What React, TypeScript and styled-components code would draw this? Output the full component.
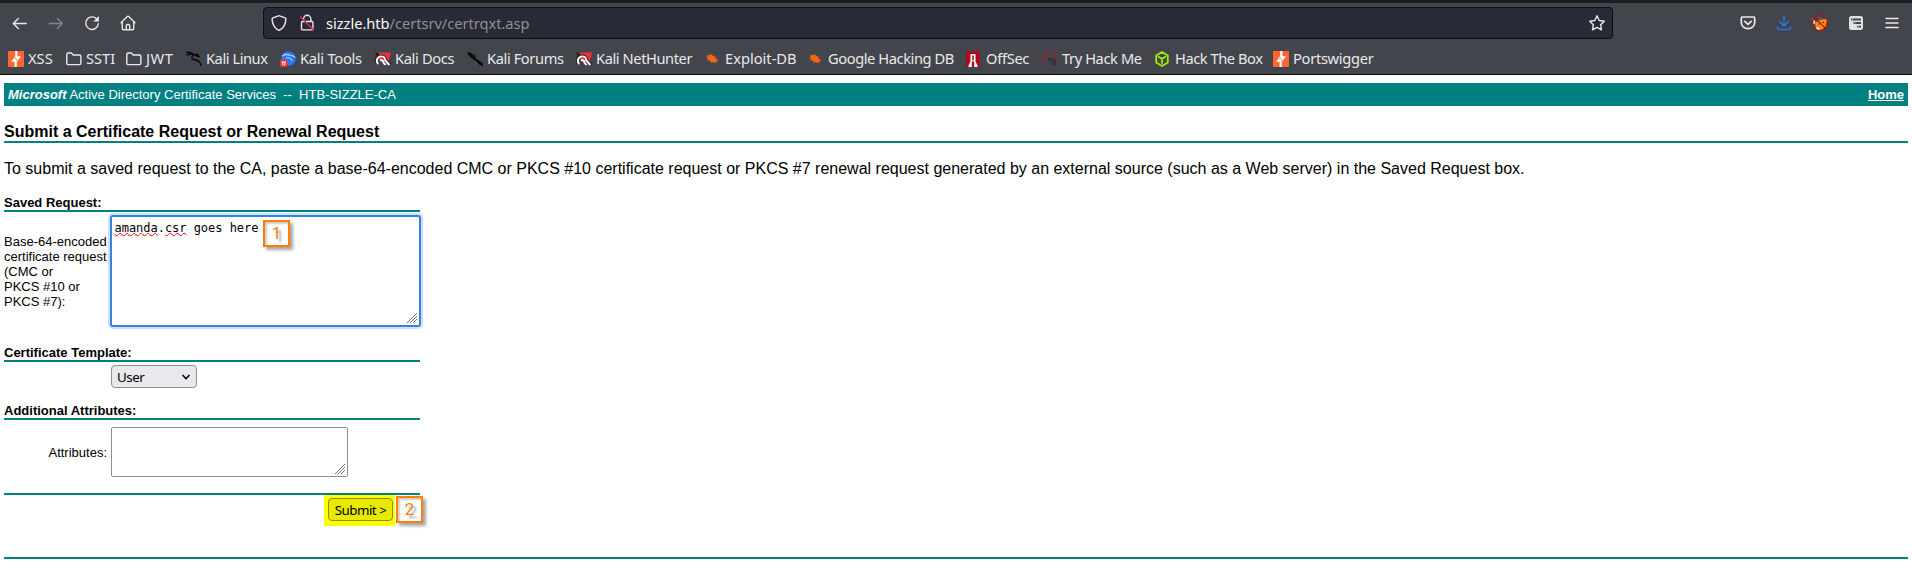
import React from 'react';
import styled, { createGlobalStyle } from 'styled-components';

const Global = createGlobalStyle`
  * { box-sizing: border-box; }
  body { margin: 0; background: #fff; color: #000; font-family: "Liberation Sans", Arial, sans-serif; }
  html, body { overflow: hidden; }
`;

const UI_FONT = '"Noto Sans", sans-serif';
const TEAL = '#008080';

const Screen = styled.div`
  width: 1912px;
  height: 570px;
  overflow: hidden;
  display: flex;
  flex-direction: column;
`;

const Chrome = styled.header`
  height: 75px;
  flex: none;
  background: #43454c;
  border-top: 3px solid #1c1d21;
  border-bottom: 1px solid #0c0c0d;
  font-family: ${UI_FONT};
  color: #e9e9ea;
`;

const Toolbar = styled.div`
  display: flex;
  align-items: center;
  height: 40px;
  padding: 0 11px 0 11px;
`;

const NavGroup = styled.nav`
  display: flex;
  gap: 18px;
  width: 252px;
`;

const Glyph = styled.svg<{ $size?: number }>`
  width: ${p => p.$size ?? 18}px;
  height: ${p => p.$size ?? 18}px;
  flex: none;
  display: block;
  overflow: visible;
`;

const AddressBar = styled.div`
  display: flex;
  align-items: center;
  width: 1350px;
  height: 32px;
  background: #282a35;
  border: 1px solid #0e0f12;
  border-radius: 4px;
  padding: 0 6px 0 6px;
  gap: 10px;
`;

const Url = styled.span`
  flex: 1;
  font-size: 14.67px;
  line-height: 20px;
  letter-spacing: -0.04px;
  color: #8f9095;
  white-space: nowrap;
  b { font-weight: 400; color: #f9f9fa; }
`;

const Actions = styled.div`
  display: flex;
  gap: 18px;
  margin-left: auto;
`;

const Bookmarks = styled.div`
  display: flex;
  height: 31px;
  align-items: flex-start;
  padding: 8px 0 0 8px;
`;

const Bookmark = styled.div<{ $w: number; $track: number }>`
  display: flex;
  align-items: center;
  gap: 4px;
  flex: none;
  height: 16px;
  width: ${p => p.$w}px;
  font-size: 14.67px;
  line-height: 20px;
  letter-spacing: ${p => p.$track}px;
  white-space: nowrap;
  span { margin-top: -2px; }
`;

const Page = styled.main`
  padding: 8px 4px 0;
  display: flex;
  flex-direction: column;
`;

const Banner = styled.div`
  display: flex;
  justify-content: space-between;
  align-items: center;
  height: 23px;
  padding: 0 4px;
  background: ${TEAL};
  color: #fff;
  font-size: 13px;
  white-space: pre;
  a { color: #fff; font-weight: 700; text-decoration: underline; }
`;

const Title = styled.h1`
  margin: 16px 0 0;
  height: 21px;
  padding-top: 1px;
  border-bottom: 2px solid ${TEAL};
  font-size: 16px;
  line-height: 18px;
`;

const Intro = styled.p`
  margin: 17px 0 0;
  font-size: 16px;
  line-height: 18px;
  height: 33px;
`;

const Form = styled.form`
  width: 416px;
  display: flex;
  flex-direction: column;
`;

const Legend = styled.h2<{ $top: number }>`
  margin: ${p => p.$top}px 0 0;
  height: 18px;
  padding-top: 1px;
  font-size: 13px;
  line-height: 15px;
  border-bottom: 2px solid ${TEAL};
`;

const Row = styled.div<{ $top: number; $height: number }>`
  display: flex;
  align-items: center;
  margin-top: ${p => p.$top}px;
  height: ${p => p.$height}px;
`;

const Label = styled.label<{ $right?: boolean }>`
  width: 107px;
  padding-right: ${p => (p.$right ? 4 : 0)}px;
  text-align: ${p => (p.$right ? 'right' : 'left')};
  flex: none;
  font-size: 13px;
  line-height: 15px;
  margin-right: -1px;
  white-space: nowrap;
`;

const Field = styled.div<{ $w: number; $h: number; $focus?: boolean }>`
  position: relative;
  flex: none;
  display: flex;
  align-items: flex-start;
  width: ${p => p.$w}px;
  height: ${p => p.$h}px;
  padding: ${p => (p.$focus ? '4px 2.5px' : '3px')};
  margin-left: ${p => (p.$focus ? 0 : 1)}px;
  border: ${p => (p.$focus ? '2px solid #3584e4' : '1px solid #8f8f9d')};
  border-radius: ${p => (p.$focus ? 3 : 2)}px;
  box-shadow: ${p => (p.$focus ? '0 0 0 2px #c9e2fb' : 'none')};
  background: #fff;
  font: 12px/14px "DejaVu Sans Mono", monospace;
  letter-spacing: -0.03px;
  white-space: pre;
`;

const Misspelt = styled.span`
  text-decoration: underline wavy #f00 1px;
  text-underline-offset: 0;
  text-decoration-skip-ink: none;
`;

const Grip = styled.svg`
  position: absolute;
  right: 2px;
  bottom: 2px;
  width: 10px;
  height: 10px;
`;

const Select = styled.div`
  display: flex;
  align-items: center;
  justify-content: space-between;
  width: 86px;
  height: 23px;
  margin-left: 107px;
  padding: 0 5px;
  border: 1px solid #8f8f9d;
  border-radius: 4px;
  background: #e9e9ed;
  font: 13.33px/18px ${UI_FONT};
  letter-spacing: -0.5px;
`;

const Footer = styled.div`
  display: flex;
  justify-content: flex-end;
  position: relative;
  margin-top: 16px;
  height: 64px;
  border-top: 2px solid ${TEAL};
`;

const Highlight = styled.div`
  width: 71px;
  height: 31px;
  margin-right: 25px;
  padding: 3px 2px 0 4px;
  background: #ff0;
`;

const SubmitButton = styled.button`
  display: block;
  width: 65px;
  height: 23px;
  padding: 0;
  border: 1px solid #8f8f00;
  border-radius: 4px;
  background: #e9e900;
  color: #000;
  font: 13.33px/20px ${UI_FONT};
  letter-spacing: -0.5px;
  white-space: nowrap;
`;

const Marker = styled.span<{ $x: number; $y: number }>`
  position: absolute;
  left: ${p => p.$x}px;
  top: ${p => p.$y}px;
  width: 27px;
  height: 27px;
  border: 2px solid #ff8000;
  background: #fff;
  box-shadow: 3px 3px 3px rgba(0, 0, 0, 0.35), inset 2px 2px 2px rgba(0, 0, 0, 0.2);
  color: #ff8000;
  text-shadow: 3px 3px 2px rgba(70, 90, 120, 0.5);
  font: 17px/23px Roboto, sans-serif;
  text-align: center;
`;

const PageEnd = styled.div`
  height: 2px;
  background: ${TEAL};
`;

const line = { fill: 'none', stroke: '#e9e9ea', strokeWidth: 1.4, strokeLinecap: 'round', strokeLinejoin: 'round' } as const;

const Folder = () => (
  <Glyph $size={16} viewBox="0 0 16 16">
    <path {...line} d="M.8 12V3.7Q.8 2 2.4 2h3L7.3 4h6q1.6 0 1.6 1.6V12q0 1.6-1.6 1.6h-11Q.8 13.6.8 12Z" />
  </Glyph>
);
const Burp = () => (
  <Glyph $size={16} viewBox="0 0 16 16">
    <path d="M0 0h16v16H0z" fill="#ff6633" />
    <path d="M7.2 0h2.2v5.2H13L8.8 11v5H6.6v-5.2H3.2L7.2 5z" fill="#fff" />
    <path d="M7.8 5.3v2.5h2.6L8 10.7V8.3H5.6z" fill="#ff6633" opacity=".55" />
  </Glyph>
);
const Dragon = () => (
  <Glyph $size={16} viewBox="0 0 16 16">
    <path d="M0 1.2q4-.5 7 1.6M.5 4q4-1.5 7.5-.6l2.4 1.5 3 1M8 3.5q-4 3.5-.5 5 4 .4 5.5 2 2 1.5 1.8 4.5M3 2l5 1.2" fill="none" stroke="#050505" strokeWidth="1.4" />
    <path d="m9 4 2-2 3.5 4.5L11 5z" fill="#050505" />
  </Glyph>
);
const Tools = () => (
  <Glyph $size={16} viewBox="0 0 16 16">
    <circle cx="8.5" cy="7.7" r="7.2" fill="#2777ff" />
    <path d="M2 5q5-3 8-.5 4 0 5 2M6 7q5-1 6 3M4 3l5 1" fill="none" stroke="#b6d3ff" strokeWidth="1.1" />
    <rect y="8.5" width="7.5" height="7.5" rx="2" fill="#ef302f" />
    <path d="M1.5 11h4.5M2.8 11v3.4M4.8 11v3.4" stroke="#fff" fill="none" />
  </Glyph>
);
const Docs = () => (
  <Glyph $size={16} viewBox="0 0 16 16">
    <path d="M4 1.5h12l-2.5 9.5-2 2L3 8z" fill="#f02d38" />
    <path d="M0 1l4.5 2.2L2 5z" fill="#151515" />
    <path d="M2.6 13Q-.6 8 4 5.4 10 4 10.4 9l4.6 5" fill="none" stroke="#26151a" strokeWidth="3.2" />
    <path d="M3 13.2Q0 8.3 4.3 5.8 10 4.5 10 9l4.3 5M5 9.3q3-.8 3.5 2.2l2 2.5" fill="none" stroke="#fff" strokeWidth="2" />
  </Glyph>
);
const Forums = () => (
  <Glyph $size={16} viewBox="0 0 16 16">
    <path d="m0 .5 5 2.2 3.8 4.8 5.5 3.8 1.5 4-3.6-1.7-3.4-4L3 6z" fill="#050505" />
    <path d="M4 5 1 4M7 3l2 3M6 8l3 1M15.5 12v3" stroke="#111" fill="none" />
  </Glyph>
);
const Bug = () => (
  <Glyph $size={16} viewBox="0 0 16 16">
    <path d="m2 4.6 4-1.2 4 2.4 2.6 4.2-1.9 1.8-4.2-.5-3.9-3z" fill="#f36610" />
    <path d="M3 5 1.2 3M6 4l.7-1.7M9.5 6l2.6-1M11.5 9l2.7-.4M10 11l1.6 1.8M6.5 11l-1 1.6M4 9l-2.6 1M3 7H.6" stroke="#b95523" fill="none" strokeWidth=".7" />
  </Glyph>
);
const OffSec = () => (
  <Glyph $size={16} viewBox="0 0 16 16">
    <path d="M0 0h14v16H0z" fill="#ac0a1f" />
    <path d="M4.5 3h5v7.5l2 4V16H8.2v-5.5H5.8V16H2.5v-1.5l2-4z" fill="#fff" />
    <path d="M6.2 4.5h1.6v5H6.2z" fill="#ac0a1f" />
  </Glyph>
);
const Cloud = () => (
  <Glyph $size={16} viewBox="0 0 16 16">
    <path d="M4 10.5H2.8Q.4 9.8.6 7.3 1.4 5 3.4 5 4 1 8 .8q3.3.1 4 3.6 3.3.6 2.8 4.1" fill="none" stroke="#b01820" strokeWidth="1.1" />
    <path d="M6 8h3m1 0h3M9 10.5h5M8 13h1m2 0h4" stroke="#252e3a" strokeWidth="1.3" />
    <path d="M6 10.2h2m3-2h3m-5 6.6h4" stroke="#8f2029" />
  </Glyph>
);
const Cube = () => (
  <Glyph $size={16} viewBox="0 0 16 16">
    <path d="M7 .9 12.8 4.4v7.2L7 15.1l-5.8-3.5V4.4zM3.6 5.7 7 7.8l3.4-2.1M7 7.8V12" fill="none" stroke="#9fef00" strokeWidth="1.8" strokeLinejoin="round" strokeLinecap="round" />
  </Glyph>
);

const bookmarks: [string, number, number, React.FC][] = [
  ['XSS', 58, 0, Burp],
  ['SSTI', 60, 0, Folder],
  ['JWT', 60, 0.6, Folder],
  ['Kali Linux', 94, -0.45, Dragon],
  ['Kali Tools', 95, -0.25, Tools],
  ['Kali Docs', 92, -0.35, Docs],
  ['Kali Forums', 109, -0.4, Forums],
  ['Kali NetHunter', 129, -0.42, Docs],
  ['Exploit-DB', 103, 0, Bug],
  ['Google Hacking DB', 158, -0.42, Bug],
  ['OffSec', 76, -0.3, OffSec],
  ['Try Hack Me', 113, -0.4, Cloud],
  ['Hack The Box', 118, -0.45, Cube],
  ['Portswigger', 110, -0.3, Burp],
];

const ResizeGrip = () => (
  <Grip viewBox="0 0 10 10">
    <path d="M0 10 10 0M3 10l7-7M6 10l4-4" stroke="#777" strokeWidth="1" fill="none" />
  </Grip>
);

export default function App() {
  return (
    <Screen>
      <Global />
      <Chrome>
        <Toolbar>
          <NavGroup>
            <Glyph viewBox="0 0 18 18"><path {...line} d="M15.3 9.5H2.3M7.3 4.5l-5 5 5 5" /></Glyph>
            <Glyph viewBox="0 0 18 18" opacity=".4"><path {...line} d="M2.3 9.5h13M10.3 4.5l5 5-5 5" /></Glyph>
            <Glyph viewBox="0 0 18 18"><path {...line} d="M14.5 6A6.3 6.3 0 1 0 15.3 9.8" /><path d="M15.9 2v5.5h-5.5z" fill="#e9e9ea" /></Glyph>
            <Glyph viewBox="0 0 18 18"><path {...line} d="m2 8.8 6.3-6.3q.7-.6 1.4 0L16 8.8M3.3 8v6.2q0 1.5 1.5 1.5h8.4q1.5 0 1.5-1.5V8M7.3 15.5v-4q0-1 1-1h1.4q1 0 1 1v4" /></Glyph>
          </NavGroup>
          <AddressBar>
            <Glyph viewBox="0 0 18 18"><path {...line} d="M8.4 1.8q.6-.3 1.2 0l5.5 2q.8.3.8 1.2-.2 7.7-6.3 11.1-.6.3-1.2 0Q2.3 12.7 2.1 5q0-.9.8-1.2z" /></Glyph>
            <Glyph viewBox="0 0 18 18"><path {...line} d="M5.5 7.5V5a3.7 3.7 0 0 1 7.4 0v2.5M4.7 7.5h9q1.2 0 1.2 1.2v6q0 1.2-1.2 1.2h-9q-1.2 0-1.2-1.2v-6q0-1.2 1.2-1.2z" /><path d="m2 2.5 14 13.8" stroke="#e22850" strokeWidth="1.5" /></Glyph>
            <Url><b>sizzle.htb</b>/certsrv/certrqxt.asp</Url>
            <Glyph viewBox="0 0 18 18"><path {...line} d="m9 1.8 2.2 4.7 5.1.7-3.7 3.5.9 5.2L9 13.4l-4.5 2.5.9-5.2-3.7-3.5 5.1-.7z" /></Glyph>
          </AddressBar>
          <Actions>
            <Glyph viewBox="0 0 18 18"><path {...line} strokeWidth={1.7} d="M3.5 3h11q1.2 0 1.2 1.2v4.3a6.7 6.2 0 0 1-13.4 0V4.2Q2.3 3 3.5 3zM5.8 7.3 9 10.3l3.2-3" /></Glyph>
            <Glyph viewBox="0 0 18 18"><path {...line} stroke="#2a74f0" d="M9 1.5v10M4.5 7.5 9 12l4.5-4.5M2.5 13v1.2q0 1.3 1.3 1.3h10.4q1.3 0 1.3-1.3V13" /></Glyph>
            <Glyph viewBox="0 0 18 18">
              <path d="m4 9 4-3 4-1 4 1-1 6-4 4-6-1z" fill="#f28b0c" />
              <path d="m5 3 4-1 3 3-4 1z" fill="#4d5665" />
              <path d="m1.5 4 3 4-2 3zM14 3.5l2 2-1 3zM5 13.5l3 0 1 2-3 .8z" fill="#eee" />
              <path d="M7 10h1.5M11.5 8.5H13" stroke="#3c2515" />
              <circle cx="9" cy="9" r="7.5" fill="none" stroke="#b90909" strokeWidth="1.2" />
              <path d="m3.8 3.8 10.4 10.4" stroke="#b90909" strokeWidth="1.2" />
            </Glyph>
            <Glyph viewBox="0 0 18 18">
              <rect x="2" y="2" width="14" height="14" rx="2.5" fill="#e0e0e0" />
              <path d="M4 5.5h10M6.5 9H14M10 12.6h4" stroke="#43454c" strokeWidth="1.8" />
              <path d="M5 5.5h1M7.5 9h1M11 12.6h1" stroke="#ddd" />
            </Glyph>
            <Glyph viewBox="0 0 18 18"><path d="M3 4.5h12M3 9h12M3 13.5h12" {...line} /></Glyph>
          </Actions>
        </Toolbar>
        <Bookmarks>
          {bookmarks.map(([name, width, track, Icon]) => (
            <Bookmark key={name} $w={width} $track={track}><Icon /><span>{name}</span></Bookmark>
          ))}
        </Bookmarks>
      </Chrome>
      <Page>
        <Banner><span><b><i>Microsoft</i></b>{' Active Directory Certificate Services \u00a0--\u00a0 HTB-SIZZLE-CA'}</span><a>Home</a></Banner>
        <Title>Submit a Certificate Request or Renewal Request</Title>
        <Intro>To submit a saved request to the CA, paste a base-64-encoded CMC or PKCS #10 certificate request or PKCS #7 renewal request generated by an external source (such as a Web server) in the Saved Request box.</Intro>
        <Form>
          <Legend $top={1}>Saved Request:</Legend>
          <Row $top={3} $height={112}>
            <Label>Base-64-encoded<br />certificate request<br />(CMC or<br />PKCS #10 or<br />PKCS #7):</Label>
            <Field $w={311} $h={112} $focus>
              <Misspelt>amanda</Misspelt>.<Misspelt>csr</Misspelt> goes here
              <Marker $x={151} $y={3}>1</Marker>
              <ResizeGrip />
            </Field>
          </Row>
          <Legend $top={17}>Certificate Template:</Legend>
          <Row $top={3} $height={23}>
            <Select>User<Glyph $size={10} viewBox="0 0 10 10"><path d="m1.5 3 3.5 3.7L8.5 3" fill="none" stroke="#000" strokeWidth="1.6" /></Glyph></Select>
          </Row>
          <Legend $top={14}>Additional Attributes:</Legend>
          <Row $top={7} $height={50}>
            <Label $right>Attributes:</Label>
            <Field $w={237} $h={50}><ResizeGrip /></Field>
          </Row>
          <Footer>
            <Highlight><SubmitButton type="button">Submit &gt;</SubmitButton></Highlight>
            <Marker $x={392} $y={1}>2</Marker>
          </Footer>
        </Form>
        <PageEnd />
      </Page>
    </Screen>
  );
}
